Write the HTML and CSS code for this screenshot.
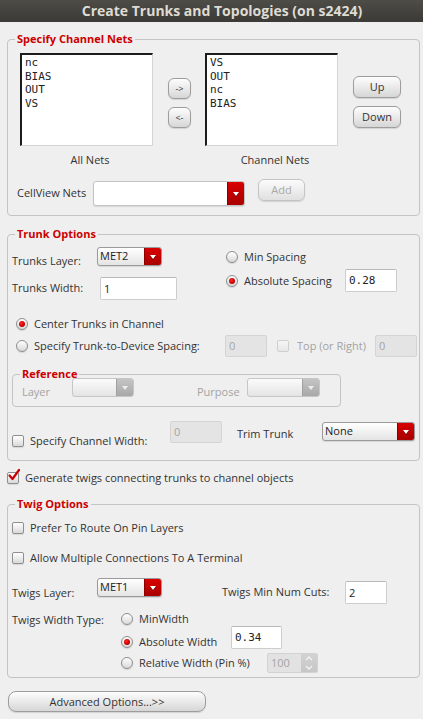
FILE: index.html
```html
<!DOCTYPE html>
<html>
<head>
<meta charset="utf-8">
<title>Create Trunks and Topologies</title>
<link rel="stylesheet" href="styles.css">
</head>
<body>
<div class="titlebar">Create Trunks and Topologies (on s2424)</div>
<main class="dialog">
  <fieldset class="group nets">
    <legend>Specify Channel Nets</legend>
    <div class="nets-row">
      <div class="list-col">
        <ul class="list"><li>nc</li><li>BIAS</li><li>OUT</li><li>VS</li></ul>
        <div class="list-label">All Nets</div>
      </div>
      <div class="move-col">
        <button class="btn arrow">-&gt;</button>
        <button class="btn arrow">&lt;-</button>
      </div>
      <div class="list-col second">
        <ul class="list"><li>VS</li><li>OUT</li><li>nc</li><li>BIAS</li></ul>
        <div class="list-label">Channel Nets</div>
      </div>
      <div class="order-col">
        <button class="btn order">Up</button>
        <button class="btn order">Down</button>
      </div>
    </div>
    <div class="cv-row">
      <span class="cv-label">CellView Nets</span>
      <div class="combo combo-cv"><span class="combo-text"></span><span class="combo-arrow"></span></div>
      <button class="btn add" disabled>Add</button>
    </div>
  </fieldset>

  <fieldset class="group trunk">
    <legend>Trunk Options</legend>
    <div class="trunk-top">
      <div class="trunk-left">
        <div class="frow layer-row">
          <span class="flabel layer-label">Trunks Layer:</span>
          <div class="combo combo-layer"><span class="combo-text">MET2</span><span class="combo-arrow"></span></div>
        </div>
        <div class="frow width-row">
          <span class="flabel width-label">Trunks Width:</span>
          <span class="field trunk-width">1</span>
        </div>
      </div>
      <div class="trunk-right">
        <div class="opt min-row"><span class="radio"></span><span>Min Spacing</span></div>
        <div class="abs-row">
          <div class="opt abs-opt"><span class="radio on"></span><span>Absolute Spacing</span></div>
          <span class="field mono abs-field">0.28</span>
        </div>
      </div>
    </div>
    <div class="opt center-row"><span class="radio on"></span><span>Center Trunks in Channel</span></div>
    <div class="spacing-row">
      <div class="opt spacing-opt"><span class="radio"></span><span>Specify Trunk-to-Device Spacing:</span></div>
      <span class="field dis small-field">0</span>
      <div class="opt disabled top-opt"><span class="check dis"></span><span>Top (or Right)</span></div>
      <span class="field dis small-field">0</span>
    </div>
    <fieldset class="group ref">
      <legend>Reference</legend>
      <div class="ref-row">
        <span class="flabel disabled ref-label">Layer</span>
        <div class="combo dis ref-layer"><span class="combo-text"></span><span class="combo-arrow"></span></div>
        <span class="flabel disabled ref-label purpose">Purpose</span>
        <div class="combo dis ref-purpose"><span class="combo-text"></span><span class="combo-arrow"></span></div>
      </div>
    </fieldset>
    <div class="cw-row">
      <div class="opt cw-opt"><span class="check"></span><span>Specify Channel Width:</span></div>
      <span class="field dis cw-field">0</span>
      <span class="flabel trim-label">Trim Trunk</span>
      <div class="combo trim-combo"><span class="combo-text">None</span><span class="combo-arrow"></span></div>
    </div>
  </fieldset>

  <div class="opt gen-row">
    <span class="check"><svg width="14" height="14" viewBox="0 0 14 14"><path d="M2.5 6.5 L5.5 10 L12 1" fill="none" stroke="#c80000" stroke-width="2.2" stroke-linecap="round" stroke-linejoin="round"/></svg></span>
    <span>Generate twigs connecting trunks to channel objects</span>
  </div>

  <fieldset class="group twig">
    <legend>Twig Options</legend>
    <div class="opt prefer-row"><span class="check"></span><span>Prefer To Route On Pin Layers</span></div>
    <div class="opt allow-row"><span class="check"></span><span>Allow Multiple Connections To A Terminal</span></div>
    <div class="frow twig-layer-row">
      <span class="flabel twig-layer-label">Twigs Layer:</span>
      <div class="combo combo-layer"><span class="combo-text">MET1</span><span class="combo-arrow"></span></div>
      <span class="flabel cuts-label">Twigs Min Num Cuts:</span>
      <span class="field cuts-field">2</span>
    </div>
    <div class="wtype">
      <span class="flabel wtype-label">Twigs Width Type:</span>
      <div class="wtype-opts">
        <div class="opt"><span class="radio"></span><span>MinWidth</span></div>
        <div class="abs-width-row">
          <div class="opt abs-width-opt"><span class="radio on"></span><span>Absolute Width</span></div>
          <span class="field mono abs-width-field">0.34</span>
        </div>
        <div class="rel-row">
          <div class="opt rel-opt"><span class="radio"></span><span>Relative Width (Pin %)</span></div>
          <div class="spin">
            <span class="spin-text">100</span>
            <span class="spin-btns"><svg width="16" height="18" viewBox="0 0 16 18"><path d="M5 6 L8 3 L11 6" fill="none" stroke="#f4f4f4" stroke-width="1.3"/><path d="M5 12 L8 15 L11 12" fill="none" stroke="#f4f4f4" stroke-width="1.3"/></svg></span>
          </div>
        </div>
      </div>
    </div>
  </fieldset>

  <button class="btn advanced">Advanced Options...&gt;&gt;</button>
</main>
</body>
</html>
```

FILE: styles.css
```css
* { box-sizing: border-box; }

html, body {
  margin: 0;
  padding: 0;
}

body {
  width: 423px;
  height: 719px;
  overflow: hidden;
  background: #efefef;
  font-family: "Open Sans", "DejaVu Sans", sans-serif;
  font-size: 11px;
  line-height: 14px;
  color: #333333;
}

.titlebar {
  height: 22px;
  line-height: 22px;
  padding-left: 21px;
  background: linear-gradient(#4d4c47, #3b3a36);
  color: #dfdbd2;
  font-weight: bold;
  font-size: 14px;
  text-align: center;
  white-space: nowrap;
}

.dialog {
  padding: 0 3px 0 7px;
}

.group {
  margin: 0;
  padding: 0;
  width: 413px;
  min-width: 0;
  border: 1px solid #c4c4c4;
  border-radius: 4px;
}

.group > legend {
  margin-left: 7px;
  padding: 0 2px;
  color: #cc0000;
  font-weight: bold;
  line-height: 14px;
}

.btn {
  font: inherit;
  color: #333;
  padding: 0;
  border: 1px solid #9d9d9d;
  border-radius: 6px;
  background: linear-gradient(#fdfdfd, #ececec 45%, #d6d6d6);
  box-shadow: 0 1px 1px rgba(0, 0, 0, 0.12);
}

.btn:disabled {
  color: #a9a9a9;
  border-color: #c4c4c4;
  background: linear-gradient(#fbfbfb, #efefef 45%, #e0e0e0);
}

.flabel {
  display: block;
  flex: none;
  white-space: nowrap;
}

.disabled { color: #a3a3a3; }

.opt {
  display: flex;
  align-items: center;
  gap: 6px;
  height: 14px;
  white-space: nowrap;
  flex: none;
}

.radio {
  flex: none;
  width: 12px;
  height: 12px;
  border-radius: 50%;
  border: 1px solid #8e8e8e;
  background: linear-gradient(#ffffff, #d8d8d8);
  box-shadow: 0 1px 1px rgba(0, 0, 0, 0.12);
  display: flex;
  align-items: center;
  justify-content: center;
}

.radio.on::after {
  content: "";
  width: 6px;
  height: 6px;
  border-radius: 50%;
  background: radial-gradient(circle at 40% 35%, #ff2a2a, #d00000 55%, #8c0000);
}

.check {
  flex: none;
  position: relative;
  width: 12px;
  height: 12px;
  border: 1px solid #8f8f8f;
  border-radius: 2px;
  background: linear-gradient(#ffffff, #d9d9d9);
  box-shadow: 0 1px 1px rgba(0, 0, 0, 0.1);
}

.check.dis {
  border-color: #cfcfcf;
  background: linear-gradient(#f6f6f6, #e6e6e6);
  box-shadow: none;
}

.check svg {
  position: absolute;
  left: -1px;
  top: -4px;
  overflow: visible;
}

.field {
  display: block;
  flex: none;
  height: 23px;
  line-height: 21px;
  padding-left: 3px;
  background: #ffffff;
  border: 1px solid #cdcdcd;
  border-top-color: #b9b9b9;
  border-radius: 2px;
  color: #222;
}

.field.mono {
  font-family: "DejaVu Sans Mono", monospace;
}

.field.dis {
  background: #e4e4e4;
  border-color: #d4d4d4;
  color: #a4a4a4;
}

.combo {
  display: flex;
  flex: none;
  height: 19px;
  border: 1px solid #9a9a9a;
  border-radius: 3px;
  overflow: hidden;
  background: linear-gradient(#ffffff, #e4e4e4);
  box-shadow: 0 1px 1px rgba(0, 0, 0, 0.1);
}

.combo-text {
  flex: 1;
  padding-left: 2px;
  line-height: 16px;
  color: #222;
}

.combo-arrow {
  width: 17px;
  flex: none;
  display: flex;
  align-items: center;
  justify-content: center;
  background: linear-gradient(#d90000, #a80000);
  border-left: 1px solid #8a0000;
}

.combo-arrow::after {
  content: "";
  width: 0;
  height: 0;
  border-left: 3.5px solid transparent;
  border-right: 3.5px solid transparent;
  border-top: 4px solid #ffffff;
  filter: drop-shadow(0 1px 0 rgba(0, 0, 0, 0.45));
}

.combo.dis {
  border-color: #c6c6c6;
  background: linear-gradient(#fbfbfb, #e4e4e4);
  box-shadow: none;
}

.combo.dis .combo-arrow {
  background: linear-gradient(#c4c4c4, #a8a8a8);
  border-left-color: #a0a0a0;
}

.combo.dis .combo-arrow::after {
  border-top-color: #ededed;
  filter: none;
}

.nets {
  margin-top: 10px;
  padding-bottom: 9px;
}

.nets-row {
  display: flex;
  align-items: flex-start;
  margin-top: 7px;
  padding-left: 12px;
}

.list-col {
  width: 133px;
  display: flex;
  flex-direction: column;
}

.list-col.second { margin-left: 14px; }

.list {
  list-style: none;
  margin: 0;
  padding: 1px 3px;
  height: 93px;
  background: #ffffff;
  border-top: 2px solid #1c1c1c;
  border-left: 2px solid #1c1c1c;
  border-right: 1px solid #d4d4d4;
  border-bottom: 1px solid #d4d4d4;
  font-family: "DejaVu Sans Mono", monospace;
  font-size: 11px;
  line-height: 13.5px;
  color: #222;
}

.list-label {
  margin-top: 7px;
  padding-left: 7px;
  text-align: center;
}

.move-col {
  display: flex;
  flex-direction: column;
  gap: 8px;
  margin-left: 15px;
  padding-top: 25px;
}

.btn.arrow {
  width: 23px;
  height: 21px;
  font-size: 9px;
  line-height: 18px;
}

.order-col {
  display: flex;
  flex-direction: column;
  gap: 8px;
  margin-left: 15px;
  padding-top: 23px;
}

.btn.order {
  width: 48px;
  height: 22px;
}

.cv-row {
  display: flex;
  align-items: flex-start;
  margin-top: 12px;
  padding-left: 9px;
}

.cv-label {
  width: 76px;
  margin-top: 7px;
  line-height: 14px;
  white-space: nowrap;
}

.combo-cv {
  margin-top: 2px;
  width: 152px;
  height: 25px;
  border-color: #c4c4c4;
  background: #ffffff;
}

.btn.add {
  margin-left: 13px;
  width: 47px;
  height: 22px;
}

.trunk {
  margin-top: 11px;
  padding-bottom: 12px;
}

.trunk-top {
  display: flex;
  padding-left: 4px;
}

.trunk-left { width: 214px; }

.frow {
  display: flex;
  align-items: flex-start;
}

.layer-row { margin-top: 6px; }

.layer-label { width: 85px; margin-top: 7px; }

.combo-layer { width: 65px; }

.width-row { margin-top: 9px; }

.width-label { width: 88px; margin-top: 4px; }

.trunk-width { width: 77px; }

.min-row { margin-top: 9px; }

.abs-row {
  display: flex;
  align-items: center;
  margin-top: 5px;
}

.abs-opt { width: 119px; }

.abs-field { width: 52px; }

.center-row {
  margin-top: 17px;
  padding-left: 8px;
}

.spacing-row {
  display: flex;
  align-items: center;
  margin-top: 4px;
  padding-left: 8px;
  height: 22px;
}

.spacing-opt { width: 209px; }

.small-field { width: 42px; height: 22px; line-height: 20px; }

.top-opt {
  width: 98px;
  margin-left: 10px;
  gap: 8px;
}

.group.ref {
  width: 329px;
  margin-top: 12px;
  margin-left: 4px;
  padding-bottom: 7px;
}

.group.ref > legend { line-height: 10px; }

.ref-row {
  display: flex;
  align-items: flex-start;
  margin-top: -1px;
  padding-left: 9px;
}

.ref-label { width: 50px; margin-top: 7px; }

.ref-label.purpose { margin-left: 63px; }

.ref-layer { width: 62px; }

.ref-purpose { width: 73px; }

.cw-row {
  display: flex;
  align-items: flex-start;
  margin-top: 14px;
  padding-left: 4px;
}

.cw-opt { width: 158px; margin-top: 13px; }

.cw-field { width: 52px; height: 22px; line-height: 20px; }

.trim-label { width: 85px; margin-left: 15px; margin-top: 6px; }

.trim-combo { width: 93px; margin-top: 1px; }

.gen-row {
  margin-top: 10px;
}

.twig {
  margin-top: 12px;
  padding-bottom: 4px;
}

.prefer-row { margin-top: 10px; padding-left: 4px; }

.allow-row { margin-top: 16px; padding-left: 4px; }

.twig-layer-row {
  margin-top: 13px;
  padding-left: 4px;
}

.twig-layer-label { width: 85px; margin-top: 8px; }

.cuts-label { width: 123px; margin-left: 60px; margin-top: 7px; }

.cuts-field { width: 42px; margin-top: 3px; }

.wtype {
  display: flex;
  align-items: flex-start;
  margin-top: 8px;
  padding-left: 4px;
}

.wtype-label { width: 109px; margin-top: 1px; }

.wtype-opts {
  display: flex;
  flex-direction: column;
}

.abs-width-row {
  display: flex;
  align-items: flex-start;
}

.abs-width-opt { width: 110px; margin-top: 9px; }

.abs-width-field { width: 51px; }

.rel-row {
  display: flex;
  align-items: center;
  margin-top: 4px;
  height: 20px;
}

.rel-opt { width: 146px; }

.spin {
  display: flex;
  width: 51px;
  height: 20px;
  background: #e2e2e2;
  border: 1px solid #d2d2d2;
  border-radius: 2px;
  overflow: hidden;
}

.spin-text {
  flex: 1;
  padding-left: 3px;
  line-height: 18px;
  color: #a4a4a4;
}

.spin-btns {
  width: 16px;
  flex: none;
  background: linear-gradient(#d2d2d2, #c6c6c6);
  display: flex;
  align-items: center;
  justify-content: center;
}

.btn.advanced {
  display: block;
  margin-top: 13px;
  margin-left: 1px;
  width: 198px;
  height: 21px;
  border-radius: 8px;
}
```
